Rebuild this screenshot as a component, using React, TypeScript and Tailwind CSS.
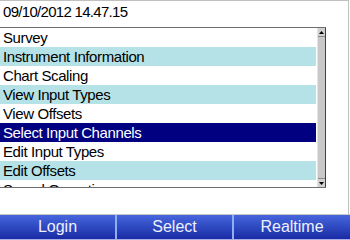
const items = [
  "Survey",
  "Instrument Information",
  "Chart Scaling",
  "View Input Types",
  "View Offsets",
  "Select Input Channels",
  "Edit Input Types",
  "Edit Offsets",
  "Sound Operations",
]

const selected = 5

function ScrollBar() {
  return (
    <div className="w-[9px] flex flex-col bg-[#c8c8c8] border-l border-[#e4e4e4] border-r border-r-[#404040]">
      <div className="h-[9px] flex items-center justify-center bg-[#d0d0d0] border-b border-[#8a8a8a]">
        <svg width="5" height="3" viewBox="0 0 5 3">
          <polygon points="2.5,0 5,3 0,3" fill="#000" />
        </svg>
      </div>
      <div className="flex-1" />
      <div className="h-[9px] flex items-center justify-center bg-[#d0d0d0] border-t border-[#8a8a8a]">
        <svg width="5" height="3" viewBox="0 0 5 3">
          <polygon points="0,0 5,0 2.5,3" fill="#000" />
        </svg>
      </div>
    </div>
  )
}

export default function App() {
  return (
    <div className="w-[350px] h-[240px] bg-white flex flex-col font-['Liberation_Sans',Arial,sans-serif] text-black overflow-hidden">
      {/* Framed area */}
      <div className="w-[349px] h-[214px] border-t border-r border-[#c0c0c0] flex flex-col">
        <div className="h-[26px] px-[3px] text-[15px] tracking-[-0.7px] leading-[20px] pt-[1px]">
          09/10/2012 14.47.15
        </div>

        {/* List box */}
        <div className="w-[326px] h-[161px] border-t border-b border-[#6e6e6e] flex">
          <div className="flex-1 overflow-hidden pr-[1px]">
            {items.map((item, i) => (
              <div
                key={item}
                className={
                  "h-[19px] shrink-0 px-[3px] text-[15px] tracking-[-0.4px] leading-[19px] whitespace-nowrap " +
                  (i === selected
                    ? "bg-[#000080] text-white"
                    : i % 2 === 1
                    ? "bg-[#b4e2e6]"
                    : "bg-white")
                }
              >
                {item}
              </div>
            ))}
          </div>
          <ScrollBar />
        </div>
      </div>

      {/* Button bar */}
      <div className="h-[26px] border-t border-[#c8c8c8] flex flex-col">
        <div className="flex-1 flex">
          <button className="w-[115px] bg-gradient-to-b from-[#4766de] to-[#1a2aa4] text-[#eef0ff] text-[16px] leading-[24px] font-['Liberation_Sans',Arial,sans-serif]">
            Login
          </button>
          <div className="w-[2px] bg-[#8cb0f2]" />
          <button className="w-[115px] bg-gradient-to-b from-[#4766de] to-[#1a2aa4] text-[#eef0ff] text-[16px] leading-[24px] font-['Liberation_Sans',Arial,sans-serif]">
            Select
          </button>
          <div className="w-[2px] bg-[#8cb0f2]" />
          <button className="flex-1 bg-gradient-to-b from-[#4766de] to-[#1a2aa4] text-[#eef0ff] text-[16px] leading-[24px] font-['Liberation_Sans',Arial,sans-serif]">
            Realtime
          </button>
        </div>
        <div className="h-[1px] bg-[#a8b0e6]" />
      </div>
    </div>
  )
}
